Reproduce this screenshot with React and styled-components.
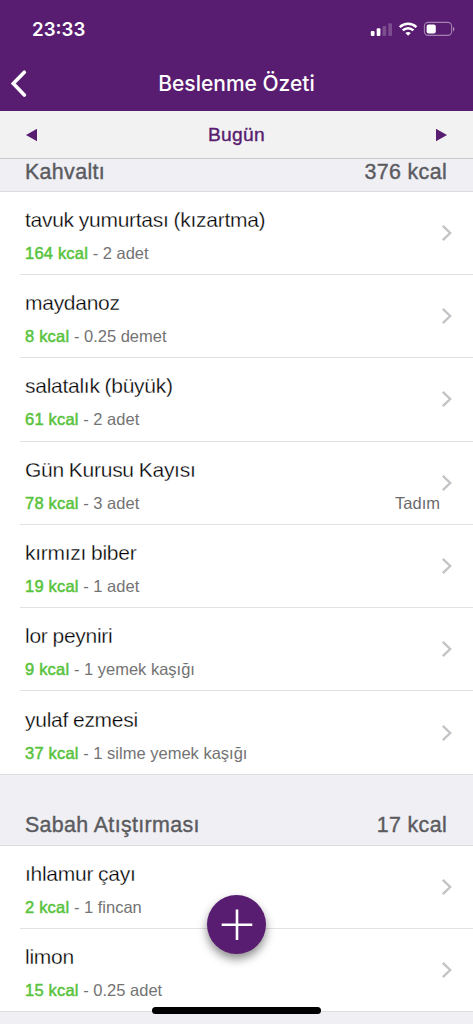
import React from 'react';
import styled, { createGlobalStyle } from 'styled-components';

const meals = [
  {
    name: "Kahvaltı",
    total: "376 kcal",
    compact: true,
    items: [
      { name: "tavuk yumurtası (kızartma)", kcal: "164 kcal", amount: "2 adet" },
      { name: "maydanoz", kcal: "8 kcal", amount: "0.25 demet" },
      { name: "salatalık (büyük)", kcal: "61 kcal", amount: "2 adet" },
      { name: "Gün Kurusu Kayısı", kcal: "78 kcal", amount: "3 adet", brand: "Tadım" },
      { name: "kırmızı biber", kcal: "19 kcal", amount: "1 adet" },
      { name: "lor peyniri", kcal: "9 kcal", amount: "1 yemek kaşığı" },
      { name: "yulaf ezmesi", kcal: "37 kcal", amount: "1 silme yemek kaşığı" },
    ],
  },
  {
    name: "Sabah Atıştırması",
    total: "17 kcal",
    items: [
      { name: "ıhlamur çayı", kcal: "2 kcal", amount: "1 fincan" },
      { name: "limon", kcal: "15 kcal", amount: "0.25 adet" },
    ],
  },
];

const StatusIcons = () => (
  <svg width="86" height="18" viewBox="0 0 86 18" fill="#fff">
    <rect x="0.8" y="11" width="3.7" height="5" rx="1" />
    <rect x="6.7" y="8.3" width="3.7" height="7.7" rx="1" />
    <rect x="12.5" y="6" width="3.7" height="10" rx="1" opacity="0.22" />
    <rect x="18.3" y="3.2" width="3.7" height="12.8" rx="1" opacity="0.22" />
    <g fill="none" stroke="#fff" strokeWidth="2.6">
      <path d="M29.8 7.1C34.5 2.6 41.7 2.6 46.4 7.1" />
      <path d="M32.8 10.4C35.8 7.5 40.4 7.5 43.4 10.4" />
    </g>
    <path d="M38.1 15.7L35.4 13C36.9 11.6 39.3 11.6 40.8 13Z" />
    <rect x="54.4" y="2.4" width="27.2" height="13" rx="3.8" fill="none" stroke="#fff" strokeOpacity="0.45" strokeWidth="1.1" />
    <rect x="56.6" y="4.5" width="9.2" height="9" rx="2" />
    <path d="M83 6.8V11.4C84.9 10.5 84.9 7.7 83 6.8Z" opacity="0.5" />
  </svg>
);

const App = () => {
  return (
    <Screen>
      <GlobalStyle />
      <Header>
        <StatusBar>
          <Time>23:33</Time>
          <StatusIcons />
        </StatusBar>
        <NavBar>
          <BackButton aria-label="Geri">
            <svg width="18" height="28" viewBox="0 0 18 28" fill="none" stroke="#fff" strokeWidth="3.6" strokeLinecap="round" strokeLinejoin="miter">
              <path d="M14.3 2.2L3.3 13.6L14.3 25" />
            </svg>
          </BackButton>
          <Title>Beslenme Özeti</Title>
        </NavBar>
      </Header>

      <DateBar>
        <svg width="12" height="13" viewBox="0 0 12 13" fill="#581c70"><path d="M1 6L12 -0.2V12.2Z" /></svg>
        <Day>Bugün</Day>
        <svg width="12" height="13" viewBox="0 0 12 13" fill="#581c70"><path d="M11 6L0 -0.2V12.2Z" /></svg>
      </DateBar>

      <List>
        {meals.map((meal) => (
          <React.Fragment key={meal.name}>
            <MealHeader $compact={meal.compact}>
              <span>{meal.name}</span>
              <span>{meal.total}</span>
            </MealHeader>
            <MealItems>
              {meal.items.map((item) => (
                <Item key={item.name}>
                  <Texts>
                    <ItemName>{item.name}</ItemName>
                    <Detail>
                      <span><Kcal>{item.kcal}</Kcal> - {item.amount}</span>
                      {item.brand && <Brand>{item.brand}</Brand>}
                    </Detail>
                  </Texts>
                  <svg width="12" height="18" viewBox="0 0 12 18" fill="none" stroke="#c4c4c8" strokeWidth="2.4">
                    <path d="M1.8 1.8L9.2 9L1.8 16.2" />
                  </svg>
                </Item>
              ))}
            </MealItems>
          </React.Fragment>
        ))}
      </List>

      <AddButton aria-label="Ekle">
        <svg width="32" height="32" viewBox="0 0 32 32" stroke="#fff" strokeWidth="2.6">
          <path d="M16 0.4V31M0.7 15.7H31.3" />
        </svg>
      </AddButton>
      <HomeIndicator />
    </Screen>
  );
};
export default App;

const GlobalStyle = createGlobalStyle`
  * {
    box-sizing: border-box;
  }

  body {
    margin: 0;
    background: #efeff4;
  }

  svg {
    display: block;
    flex-shrink: 0;
  }
`;

const Screen = styled.div`
  position: relative;
  display: flex;
  flex-direction: column;
  height: 1024px;
  overflow: hidden;
  background: #efeff4;
  font-family: "Liberation Sans", Arial, sans-serif;
`;

const Header = styled.header`
  height: 111px;
  flex-shrink: 0;
  background: #581c70;
  color: #fff;
`;

const StatusBar = styled.div`
  display: flex;
  justify-content: space-between;
  align-items: center;
  height: 57px;
  padding: 1px 16px 0 32px;

  svg {
    margin-right: 1px;
  }
`;

const Time = styled.span`
  font-family: Inter, sans-serif;
  font-size: 18.7px;
  font-weight: 600;
`;

const NavBar = styled.div`
  display: grid;
  grid-template-columns: 40px 1fr 40px;
  align-items: center;
  height: 54px;
`;

const BackButton = styled.button`
  padding: 0 0 0 10px;
  border: 0;
  background: none;
`;

const Title = styled.h1`
  margin: 0;
  text-align: center;
  font-family: Inter, sans-serif;
  font-size: 21px;
  font-weight: 500;
  line-height: 28px;
`;

const DateBar = styled.div`
  display: flex;
  justify-content: space-between;
  align-items: center;
  height: 48px;
  flex-shrink: 0;
  padding: 1px 25px 0;
  background: #f2f2f2;
  border-bottom: 1px solid #c9c9cc;
  color: #581c70;
`;

const Day = styled.span`
  font-size: 19.2px;
  letter-spacing: 0.3px;
  -webkit-text-stroke: 0.4px currentColor;
`;

const List = styled.main`
  flex: 1;
  min-height: 0;
`;

const MealHeader = styled.div`
  display: flex;
  justify-content: space-between;
  align-items: flex-end;
  height: ${({ $compact }) => ($compact ? '32px' : '70.4px')};
  padding: 0 26px ${({ $compact }) => ($compact ? '7px' : '8px')} 25px;
  color: #5b5b5f;
  font-size: 21.4px;
  letter-spacing: 0.35px;
  line-height: 24px;
  -webkit-text-stroke: 0.4px currentColor;
`;

const MealItems = styled.div`
  background: #fff;
  border-top: 1px solid #dcdcdf;
  border-bottom: 1px solid #dcdcdf;
`;

const Item = styled.div`
  display: flex;
  align-items: center;
  height: 83.3px;
  margin-left: 20px;
  padding: 0 20px 0 5px;

  &:first-child {
    height: 82px;
  }

  & + & {
    border-top: 1px solid #e2e2e4;
  }
`;

const Texts = styled.div`
  flex: 1;
  min-width: 0;
  padding-top: 4px;
`;

const ItemName = styled.div`
  color: #000;
  font-size: 21px;
  letter-spacing: -0.27px;
  word-spacing: -0.6px;
  line-height: 28px;
  -webkit-text-stroke: 0.3px #fff;
`;

const Detail = styled.div`
  display: flex;
  justify-content: space-between;
  margin-top: 8px;
  color: #737373;
  font-size: 16.5px;
  line-height: 22px;
`;

const Kcal = styled.span`
  color: #58c33c;
  letter-spacing: 0.2px;
  -webkit-text-stroke: 0.5px currentColor;
`;

const Brand = styled.span`
  margin-right: 1px;
  color: #6b6b6b;
`;

const AddButton = styled.button`
  position: absolute;
  left: 207px;
  top: 895px;
  display: flex;
  align-items: center;
  justify-content: center;
  width: 59px;
  height: 59px;
  padding: 0;
  border: 0;
  border-radius: 50%;
  background: #581c70;
  box-shadow: 0 5px 10px rgba(0, 0, 0, 0.45);
`;

const HomeIndicator = styled.div`
  position: absolute;
  left: 152px;
  bottom: 10px;
  width: 169px;
  height: 7px;
  border-radius: 4px;
  background: #000;
`;
